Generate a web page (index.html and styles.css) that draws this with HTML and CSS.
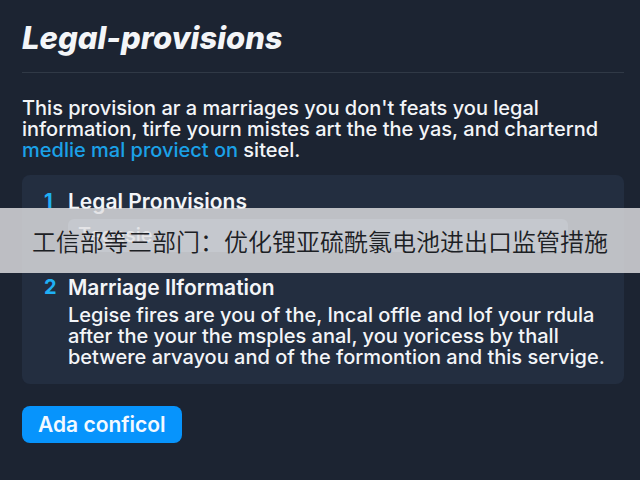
FILE: index.html
```html
<!DOCTYPE html>
<html lang="en">
<head>
    <meta charset="UTF-8">
    <meta name="viewport" content="width=device-width, initial-scale=1.0">
    <title>Legal-provisions</title>
    <link rel="stylesheet" href="styles.css">
</head>
<body>
    <main class="page">
        <h1 class="title">Legal-provisions</h1>

        <p class="intro">
            This provision ar a marriages you don't feats you legal<br>
            information, tirfe yourn mistes art the the yas, and charternd<br>
            <a href="#">medlie mal proviect on</a> siteel.
        </p>

        <div class="card">
            <section class="item">
                <span class="number">1</span>
                <div class="item-body">
                    <h2>Legal Pronvisions</h2>
                    <div class="field">Tegasie</div>
                </div>
            </section>
            <section class="item">
                <span class="number">2</span>
                <div class="item-body">
                    <h2>Marriage Ilformation</h2>
                    <p>
                        Legise fires are you of the, Incal offle and lof your rdula<br>
                        after the your the msples anal, you yoricess by thall<br>
                        betwere arvayou and of the formontion and this servige.
                    </p>
                </div>
            </section>
        </div>

        <button class="confirm" type="button">Ada conficol</button>
    </main>

    <div class="banner" lang="zh-CN">工信部等三部门：优化锂亚硫酰氯电池进出口监管措施</div>
</body>
</html>
```
FILE: styles.css
```css
* {
    box-sizing: border-box;
}
body {
    margin: 0;
    min-height: 100vh;
    background-color: #1c2432;
    color: #f3f5f8;
    font-family: Inter, "Liberation Sans", sans-serif;
    font-size: 20px;
    font-weight: 500;
    line-height: 21px;
}
h1, h2, p {
    margin: 0;
}
.page {
    padding: 20px 16px 20px 22px;
}
.title {
    padding-bottom: 16px;
    border-bottom: 1px solid #303946;
    font-size: 31px;
    font-style: italic;
    font-weight: 800;
    line-height: 36px;
}
.intro {
    margin: 25px 0 14px;
    white-space: nowrap;
}
.intro a {
    color: #1ba1e8;
    text-decoration: none;
}
.card {
    display: flex;
    flex-direction: column;
    gap: 25px;
    padding: 16px 20px;
    background-color: #232e40;
    border-radius: 8px;
}
.item {
    display: flex;
}
.number {
    flex: 0 0 26px;
    padding-left: 2px;
    color: #1fb0f5;
    font-weight: 700;
}
.item-body {
    flex: 1;
    min-width: 0;
    white-space: nowrap;
}
.item h2 {
    margin-bottom: 7px;
    font-size: 21px;
    font-weight: 600;
    line-height: 21px;
}
.field {
    margin-right: 36px;
    padding: 6px 10px;
    background-color: #4b5a70;
    border-radius: 6px;
}
.confirm {
    margin-top: 22px;
    padding: 8px 16px;
    border: none;
    border-radius: 8px;
    background-color: #0794fc;
    color: #f3f9ff;
    font: inherit;
    font-size: 21px;
    font-weight: 600;
    cursor: pointer;
}
/* headline strip laid over the page */
.banner {
    position: absolute;
    top: 208px;
    left: 0;
    right: 0;
    padding: 16px;
    background-color: rgba(225, 225, 227, 0.82);
    color: #1c2024;
    font-family: "Noto Sans CJK SC", sans-serif;
    font-size: 24px;
    font-weight: 350;
    line-height: 33px;
    text-align: center;
    white-space: nowrap;
}
```
